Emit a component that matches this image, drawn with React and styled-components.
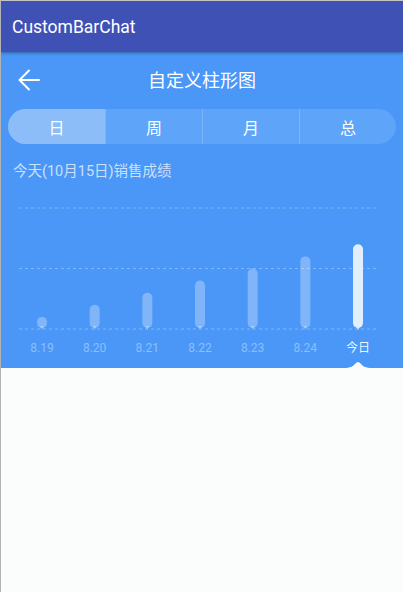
import styled, { createGlobalStyle } from 'styled-components';

const GlobalStyle = createGlobalStyle`
  html, body {
    margin: 0;
    padding: 0;
    background: #fbfdfd;
  }
  body {
    font-family: Roboto, "Noto Sans CJK SC", sans-serif;
  }
`

const Screen = styled.div`
  box-sizing: border-box;
  width: 403px;
  height: 592px;
  border-left: 1px solid #b3b3b3;
  border-top: 1px solid #c4c4c4;
  background: #fbfdfd;
  display: flex;
  flex-direction: column;
  overflow: hidden;
`

const AppBar = styled.div`
  position: relative;
  z-index: 1;
  height: 51px;
  flex-shrink: 0;
  background: #3f51b5;
  box-shadow: 0 1px 3px rgba(0, 0, 0, 0.35);
  display: flex;
  align-items: center;
  padding-left: 11px;
  padding-top: 1px;
  box-sizing: border-box;
  color: #fff;
  font-size: 17.5px;
`

const Panel = styled.div`
  height: 316px;
  flex-shrink: 0;
  background: #4a97f7;
  display: flex;
  flex-direction: column;
`

const NavRow = styled.div`
  height: 56px;
  display: grid;
  grid-template-columns: 60px 1fr 60px;
  align-items: center;
`

const BackButton = styled.div`
  display: flex;
  align-items: center;
  padding-left: 17px;
`

const NavTitle = styled.div`
  text-align: center;
  color: #fff;
  font-size: 18px;
  padding-bottom: 2px;
`

const Tabs = styled.div`
  margin: 1px 7px 0 7px;
  height: 35px;
  border-radius: 18px;
  overflow: hidden;
  display: grid;
  grid-template-columns: repeat(4, 1fr);
  background: #5ea4f8;
`

const Tab = styled.div`
  display: flex;
  align-items: center;
  justify-content: center;
  color: #fff;
  font-size: 16px;
  background: ${p => (p.$active ? '#8cbdf9' : 'transparent')};
  border-left: ${p => (p.$first ? 'none' : '1px solid rgba(255,255,255,0.18)')};
`

const Caption = styled.div`
  margin-top: 18px;
  padding-left: 12px;
  line-height: 20px;
  height: 20px;
  font-size: 14.5px;
  color: rgba(255, 255, 255, 0.72);
`

const Chart = styled.svg`
  display: block;
  width: 402px;
  height: 150px;
`

const Labels = styled.div`
  margin-top: 6px;
  margin-left: 14.67px;
  width: 368.67px;
  display: grid;
  grid-template-columns: repeat(7, 1fr);
`

const LabelCell = styled.div`
  height: 30px;
  display: flex;
  flex-direction: column;
  align-items: center;
`

const Label = styled.span`
  line-height: 20px;
  font-size: 12px;
  color: ${p => (p.$today ? 'rgba(255,255,255,0.92)' : 'rgba(255,255,255,0.38)')};
`

const Pointer = styled.svg`
  display: block;
  margin-top: 3px;
`

const tabs = ['日', '周', '月', '总'];
const days = [
  { label: '8.19', value: 1 },
  { label: '8.20', value: 2 },
  { label: '8.21', value: 3 },
  { label: '8.22', value: 4 },
  { label: '8.23', value: 5 },
  { label: '8.24', value: 6 },
  { label: '今日', value: 7, today: true },
];

const BASE = 147;
const UNIT = 12.1;

function BarChart() {
  return (
    <Chart viewBox="0 0 402 150">
      {[BASE, BASE - 5 * UNIT, BASE - 10 * UNIT].map(y => (
        <line key={y} x1="18" x2="377" y1={y} y2={y}
          stroke="rgba(255,255,255,0.3)" strokeWidth="1" strokeDasharray="3 3" />
      ))}
      {days.map((d, i) => {
        const cx = 41 + i * 52.67;
        const top = BASE - d.value * UNIT;
        const fill = d.today ? '#e3eefd' : 'rgba(255,255,255,0.3)';
        return (
          <g key={d.label} fill={fill}>
            <rect x={cx - 5} y={top} width="10" height={BASE - 1 - top} rx="5" />
            <path d={`M${cx - 2} ${BASE - 3}L${cx + 2} ${BASE - 3}L${cx} ${BASE + 1}Z`} />
          </g>
        );
      })}
    </Chart>
  );
}

export default function App() {
  return (
    <>
      <GlobalStyle />
      <Screen>
        <AppBar>CustomBarChat</AppBar>
        <Panel>
          <NavRow>
            <BackButton>
              <svg width="22" height="22" viewBox="0 0 22 22" fill="none"
                stroke="#fff" strokeWidth="2" strokeLinecap="round" strokeLinejoin="round">
                <path d="M21 11H1.5M11 1.5L1.5 11L11 20.5" />
              </svg>
            </BackButton>
            <NavTitle>自定义柱形图</NavTitle>
            <div />
          </NavRow>
          <Tabs>
            {tabs.map((t, i) => (
              <Tab key={t} $active={i === 0} $first={i === 0}>{t}</Tab>
            ))}
          </Tabs>
          <Caption>今天(10月15日)销售成绩</Caption>
          <BarChart />
          <Labels>
            {days.map(d => (
              <LabelCell key={d.label}>
                <Label $today={d.today}>{d.label}</Label>
                {d.today && (
                  <Pointer width="28" height="7" viewBox="0 0 28 7">
                    <path d="M0 7C6 7 9 5.5 11.5 2.5Q14 -0.5 16.5 2.5C19 5.5 22 7 28 7Z" fill="#fbfdfd" />
                  </Pointer>
                )}
              </LabelCell>
            ))}
          </Labels>
        </Panel>
      </Screen>
    </>
  );
}
